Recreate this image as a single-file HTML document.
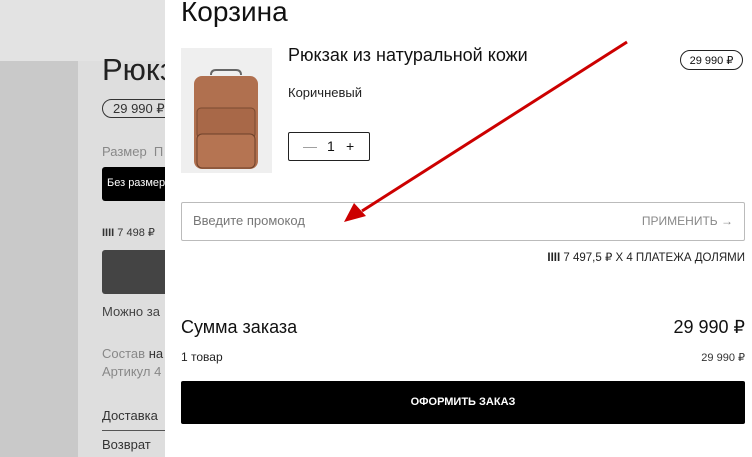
<!DOCTYPE html>
<html><head><meta charset="utf-8"><style>
*{margin:0;padding:0;box-sizing:border-box}
body{width:752px;height:457px;overflow:hidden;position:relative;font-family:"Liberation Sans",sans-serif;background:#dedede;color:#111}
.a{position:absolute;white-space:nowrap}
.r{position:absolute;white-space:nowrap;text-align:right}
</style></head><body>
<div class="a" style="left:0;top:0;width:165px;height:61px;background:#e3e3e3"></div>
<div class="a" style="left:0;top:61px;width:78px;height:396px;background:#c9c9c9"></div>
<div class="a" style="left:102px;top:52px;font-size:31px;color:#222">Рюкз</div>
<div class="a" style="left:102px;top:99px;width:80px;height:19px;border:1px solid #333;border-radius:10px;font-size:13px;padding:1px 10px;color:#333">29 990 ₽</div>
<div class="a" style="left:102px;top:144px;font-size:13px;color:#888">Размер &nbsp;П</div>
<div class="a" style="left:102px;top:167px;width:70px;height:34px;background:#000;border-radius:3px;color:#fff;font-size:11px;padding:10px 5px">Без размер</div>
<div class="a" style="left:102px;top:226px;font-size:11px;color:#333"><b>IIII</b> 7 498 ₽</div>
<div class="a" style="left:102px;top:250px;width:70px;height:44px;background:#444;border-radius:3px"></div>
<div class="a" style="left:102px;top:304px;font-size:13px;color:#444">Можно за</div>
<div class="a" style="left:102px;top:346px;font-size:13px;color:#888">Состав <span style="color:#333">на</span></div>
<div class="a" style="left:102px;top:364px;font-size:13px;color:#888">Артикул 4</div>
<div class="a" style="left:102px;top:408px;font-size:13px;color:#333">Доставка</div>
<div class="a" style="left:102px;top:430px;width:70px;height:1px;background:#555"></div>
<div class="a" style="left:102px;top:437px;font-size:13px;color:#333">Возврат</div>

<div class="a" style="left:165px;top:0;width:587px;height:457px;background:#fff"></div>
<div class="a" style="left:181px;top:-4px;font-size:28px;color:#111">Корзина</div>
<div class="a" style="left:181px;top:48px;width:91px;height:125px;background:#efefef">
<svg width="91" height="125" viewBox="0 0 91 125"><path d="M30 27 q0-5 5-5 h20 q5 0 5 5" fill="none" stroke="#666" stroke-width="2"/><rect x="13" y="28" width="64" height="93" rx="8" fill="#b0704f"/><rect x="16" y="60" width="58" height="30" rx="4" fill="#a86848" stroke="#7a4a30"/><rect x="16" y="86" width="58" height="34" rx="5" fill="#b57452" stroke="#6d412a"/></svg></div>
<div class="a" style="left:288px;top:45px;font-size:18px;color:#111">Рюкзак из натуральной кожи</div>
<div class="a" style="left:680px;top:50px;width:63px;height:20px;border:1px solid #222;border-radius:10px;font-size:11px;padding:3px 0;text-align:center">29 990 ₽</div>
<div class="a" style="left:288px;top:85px;font-size:13px;color:#222">Коричневый</div>
<div class="a" style="left:288px;top:132px;width:82px;height:29px;border:1px solid #222;border-radius:2px;font-size:14px;padding:5px 0 0 0"><span style="position:absolute;left:14px;color:#999">—</span><span style="position:absolute;left:38px">1</span><span style="position:absolute;left:57px">+</span></div>
<div class="a" style="left:181px;top:202px;width:564px;height:39px;border:1px solid #bbb;border-radius:2px"></div>
<div class="a" style="left:193px;top:213px;font-size:13px;color:#777">Введите промокод</div>
<div class="r" style="right:19px;top:214px;font-size:12px;color:#888">ПРИМЕНИТЬ →</div>
<div class="r" style="right:7px;top:250px;font-size:11.5px;color:#222"><b>IIII</b> 7 497,5 ₽ Х 4 ПЛАТЕЖА ДОЛЯМИ</div>
<div class="a" style="left:181px;top:317px;font-size:18px">Сумма заказа</div>
<div class="r" style="right:7px;top:317px;font-size:18px">29 990 ₽</div>
<div class="a" style="left:181px;top:350px;font-size:12px;color:#222">1 товар</div>
<div class="r" style="right:7px;top:351px;font-size:11px;color:#333">29 990 ₽</div>
<div class="a" style="left:181px;top:381px;width:564px;height:43px;background:#000;border-radius:2px;color:#fff;font-size:11px;font-weight:bold;text-align:center;padding-top:15px">ОФОРМИТЬ ЗАКАЗ</div>
<svg class="a" style="left:0;top:0" width="752" height="457"><line x1="627" y1="42" x2="362" y2="211" stroke="#c00" stroke-width="3"/><polygon points="344,222 354,203 366,216" fill="#c00"/></svg>
</body></html>
